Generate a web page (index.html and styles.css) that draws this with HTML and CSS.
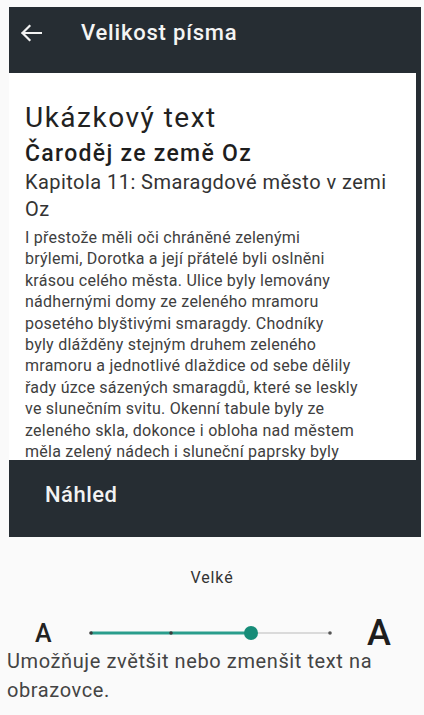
FILE: index.html
```
<!DOCTYPE html>
<html lang="cs">
<head>
<meta charset="utf-8">
<title>Velikost písma</title>
<link rel="stylesheet" href="styles.css">
</head>
<body>
<div class="frame">
  <div class="appbar">
    <svg class="back" width="22" height="18" viewBox="0 0 22 18"><path d="M21 9H2.5M9.5 2L2.5 9l7 7" fill="none" stroke="#f2f2f2" stroke-width="2.2" stroke-linecap="square"/></svg>
    <div class="title">Velikost písma</div>
  </div>
  <div class="preview">
    <div class="h1">Ukázkový text</div>
    <div class="h2">Čaroděj ze země Oz</div>
    <div class="chapter">Kapitola 11: Smaragdové město v zemi<br>Oz</div>
    <div class="body">I přestože měli oči chráněné zelenými<br>brýlemi, Dorotka a její přátelé byli oslněni<br>krásou celého města. Ulice byly lemovány<br>nádhernými domy ze zeleného mramoru<br>posetého blyštivými smaragdy. Chodníky<br>byly dlážděny stejným druhem zeleného<br>mramoru a jednotlivé dlaždice od sebe dělily<br>řady úzce sázených smaragdů, které se leskly<br>ve slunečním svitu. Okenní tabule byly ze<br>zeleného skla, dokonce i obloha nad městem<br>měla zelený nádech i sluneční paprsky byly</div>
  </div>
  <div class="nahled">Náhled</div>
</div>
<div class="settings">
  <div class="level">Velké</div>
  <div class="slider-row">
    <div class="a-small">A</div>
    <svg class="slider" width="253" height="20" viewBox="0 0 253 20">
      <line x1="167" y1="10" x2="246" y2="10" stroke="#cfcfcf" stroke-width="1.5"/>
      <line x1="7" y1="10" x2="167" y2="10" stroke="#2a9d8c" stroke-width="3"/>
      <circle cx="7" cy="10" r="1.8" fill="#3a3a3a"/>
      <circle cx="87" cy="10" r="1.8" fill="#3a3a3a"/>
      <circle cx="246" cy="10" r="1.8" fill="#555"/>
      <circle cx="167" cy="10" r="7" fill="#168c78"/>
    </svg>
    <div class="a-large">A</div>
  </div>
  <div class="desc">Umožňuje zvětšit nebo zmenšit text na<br>obrazovce.</div>
</div>
</body>
</html>
```
FILE: styles.css
```
html, body {
  margin: 0;
  padding: 0;
}
body {
  background: #fafafa;
  font-family: Roboto, "Noto Sans", "Liberation Sans", sans-serif;
  width: 424px;
  height: 715px;
  overflow: hidden;
}
.frame {
  margin: 7px 3px 0 9px;
  background: #262d33;
}
.appbar {
  height: 66px;
  box-sizing: border-box;
  padding: 12px 0 0 11px;
  display: flex;
  align-items: flex-start;
}
.back {
  margin-top: 5px;
  display: block;
}
.title {
  margin-left: 39px;
  color: #f4f4f4;
  font-size: 22px;
  letter-spacing: 0.8px;
  font-weight: 500;
  line-height: 28px;
}
.preview {
  background: #ffffff;
  margin-right: 5px;
  height: 387px;
  overflow: hidden;
  box-sizing: border-box;
  padding: 29px 0 0 16px;
  color: #222;
}
.h1 {
  font-size: 28px;
  letter-spacing: 1.5px;
  line-height: 32px;
  font-weight: 400;
  color: #222;
}
.h2 {
  margin-top: 6px;
  font-size: 23px;
  letter-spacing: 1.3px;
  line-height: 28px;
  font-weight: 500;
  color: #1e1e1e;
}
.chapter {
  margin-top: 1px;
  font-size: 20px;
  letter-spacing: 0.45px;
  line-height: 27px;
  color: #333;
}
.body {
  margin-top: 4px;
  font-size: 16px;
  letter-spacing: 0.25px;
  line-height: 21.4px;
  color: #404040;
  white-space: nowrap;
}
.nahled {
  height: 77px;
  box-sizing: border-box;
  padding: 21px 0 0 36px;
  font-size: 22px;
  letter-spacing: 0.5px;
  line-height: 28px;
  font-weight: 500;
  color: #f2f2f2;
}
.settings {
  padding-top: 31px;
}
.level {
  text-align: center;
  font-size: 16px;
  letter-spacing: 0.9px;
  line-height: 20px;
  color: #333;
}
.slider-row {
  margin-top: 31px;
  height: 28px;
  display: flex;
  align-items: center;
  padding-left: 35px;
}
.a-small {
  width: 49px;
  font-size: 25px;
  line-height: 25px;
  font-weight: 500;
  color: #222;
}
.slider {
  display: block;
}
.a-large {
  margin-left: 30px;
  font-size: 36px;
  line-height: 36px;
  font-weight: 500;
  color: #1e1e1e;
}
.desc {
  padding-left: 7px;
  font-size: 20px;
  letter-spacing: 0.6px;
  line-height: 29px;
  color: #444;
}
```
